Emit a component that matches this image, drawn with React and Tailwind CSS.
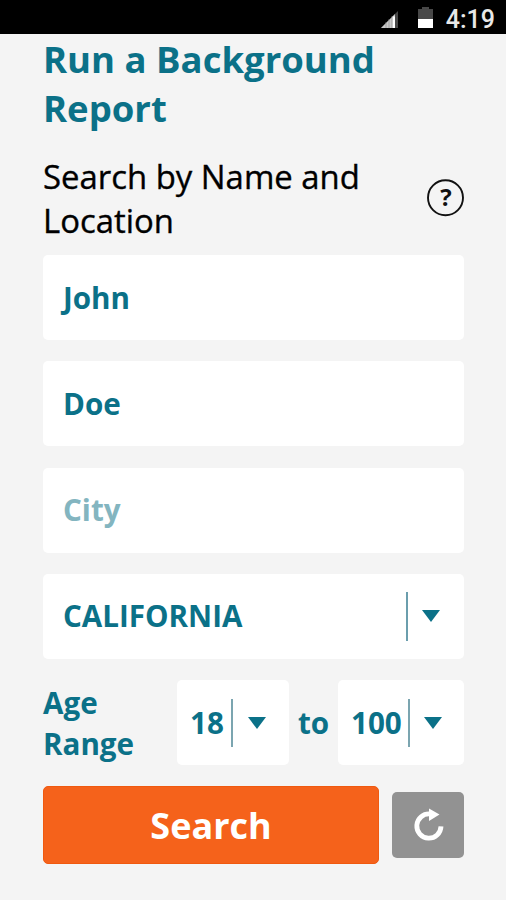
const Caret = () => (
  <svg className="h-[12px] w-[18px] shrink-0" viewBox="0 0 18 12" fill="#0b7188"><path d="M0 0H18L9 12Z" /></svg>
);

export default function App() {
  return (
    <div className="h-[900px] w-[506px] overflow-hidden bg-[#f4f4f4] font-['Open_Sans',sans-serif] text-[#0b7188]">
      <header className="flex h-[34px] items-center justify-end bg-black pt-[4px] pr-[11px]">
        <svg className="mr-[20px] h-[17px] w-[17px]" viewBox="0 0 17 17">
          <path d="M17 0V17H0Z" fill="#484848" />
          <path d="M14 3V17H0Z" fill="#c8c8c8" />
          <path d="M11.5 5.5H14V17H11.5Z" fill="#fff" />
          <path d="M5 11V17M8 8V17M11 5V17" stroke="#888" strokeWidth=".6" />
        </svg>
        <svg className="mr-[13px] mb-[3px] h-[21px] w-[15px]" viewBox="0 0 15 21">
          <path d="M4 0H11V2H15V21H0V2H4Z" fill="#484848" />
          <path d="M0 12H15V21H0Z" fill="#fff" />
        </svg>
        <span className="font-[Roboto,sans-serif] text-[25px] leading-none font-medium text-[#e8e8e8]">4:19</span>
      </header>
      <main className="pr-[42px] pl-[43px]">
        <h1 className="h-[118px] pt-px text-[36.5px] leading-[49px] font-bold whitespace-nowrap">Run a Background<br />Report</h1>
        <div className="flex h-[103px] items-start justify-between text-black">
          <h2 className="pt-[3px] text-[32.9px] leading-[44px] whitespace-nowrap [-webkit-text-stroke:0.35px_black]">Search by Name and<br />Location</h2>
          <svg className="mt-[27px] h-[38px] w-[38px] shrink-0" viewBox="0 0 38 38">
            <circle cx="19.5" cy="18.8" r="17.5" fill="none" stroke="#111" strokeWidth="1.9" />
            <text x="20" y="27" textAnchor="middle" fontFamily="Open Sans" fontWeight="700" fontSize="24" fill="#111">?</text>
          </svg>
        </div>
        <div className="flex flex-col gap-[21.3px] text-[29.6px] font-bold">
          <div className="flex h-[85px] items-center rounded-[5px] bg-white pt-px pl-5">John</div>
          <div className="flex h-[85px] items-center rounded-[5px] bg-white pt-px pl-5">Doe</div>
          <div className="flex h-[85px] items-center rounded-[5px] bg-white pt-px pl-5 text-[#83b5c0]">City</div>
          <div className="flex h-[85px] items-center rounded-[5px] bg-white pr-[24px] pl-5">
            <span className="flex-1 pb-px">CALIFORNIA</span>
            <i className="mr-[14px] h-[49px] w-[2px] bg-[#6b9ead]" />
            <Caret />
          </div>
          <div className="flex h-[85px] items-center">
            <span className="w-[134px] pt-px leading-[41px]">Age<br />Range</span>
            <div className="flex h-full w-[112px] items-center rounded-[5px] bg-white pl-[13px]">
              <span className="w-[41px] pt-[2px]">18</span>
              <i className="mr-[15px] h-[48px] w-[2px] bg-[#7ba5b0]" />
              <Caret />
            </div>
            <span className="w-[49px] pt-[2px] text-center">to</span>
            <div className="flex h-full w-[126px] items-center rounded-[5px] bg-white pl-[13px]">
              <span className="w-[57px] pt-[2px]">100</span>
              <i className="mr-[14px] h-[48px] w-[2px] bg-[#7ba5b0]" />
              <Caret />
            </div>
          </div>
          <div className="flex items-center justify-between text-white">
            <button className="h-[78px] w-[336px] rounded-[5px] border border-[#f0590f] bg-[#f5621b] pt-[2px] text-[36px]">Search</button>
            <button className="flex h-[66px] w-[72px] items-center justify-center rounded-[5px] bg-[#929292]">
              <svg className="h-[34px] w-[32px]" viewBox="0 0 32 34">
                <path d="M18 6A12.1 12.1 0 1 0 29 18.4" fill="none" stroke="#fff" strokeWidth="4.8" />
                <path d="M17 0.5L27.5 6.5L17 13Z" fill="#fff" />
              </svg>
            </button>
          </div>
        </div>
      </main>
    </div>
  );
}
